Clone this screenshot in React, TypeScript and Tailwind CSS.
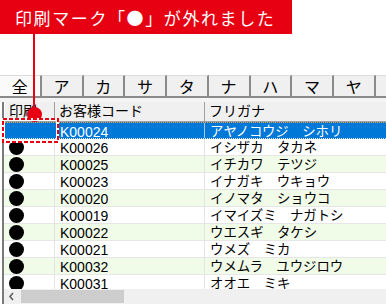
import React from "react";

const rows: [string, string][] = [
  ["K00024", "アヤノコウジ　シホリ"],
  ["K00026", "イシザカ　タカネ"],
  ["K00025", "イチカワ　テツジ"],
  ["K00023", "イナガキ　ウキョウ"],
  ["K00020", "イノマタ　ショウコ"],
  ["K00019", "イマイズミ　ナガトシ"],
  ["K00022", "ウエスギ　タケシ"],
  ["K00021", "ウメズ　ミカ"],
  ["K00032", "ウメムラ　ユウジロウ"],
  ["K00031", "オオエ　ミキ"],
];

const tabs = ["全", "ア", "カ", "サ", "タ", "ナ", "ハ", "マ", "ヤ", ""];

const font = { fontFamily: '"Liberation Sans", "Noto Sans CJK JP", sans-serif' };

export default function App() {
  return (
    <div className="relative w-[386px] h-[307px] overflow-hidden bg-white" style={font}>
      {/* banner */}
      <div className="w-[292px] h-[34px] bg-[#e60012] flex items-center pl-[15px]">
        <span
          className="text-white text-[17px] tracking-[1.6px] leading-none"
          style={{ fontFamily: '"Noto Sans CJK JP", sans-serif' }}
        >
          印刷マーク「●」が外れました
        </span>
      </div>
      <div className="h-[41px]" />
      {/* tabs */}
      <div className="flex h-[21px] w-[420px]">
        {tabs.map((t, i) => (
          <div
            key={i}
            className={`w-[41.75px] shrink-0 flex items-center justify-center text-[16px] text-black border-t border-[#dcdcdc] border-r-2 border-r-[#8a8a8a] ${
              i === 0 ? "bg-[#fafafa]" : "bg-[#f0f0f0]"
            }`}
            style={{ fontFamily: '"Noto Sans CJK JP", sans-serif' }}
          >
            {t}
          </div>
        ))}
      </div>
      <div className="h-[2px] bg-[#8a8a8a]" />
      <div className="h-[4px] bg-[#f4f4f4]" />
      {/* grid */}
      <div className="ml-[2px] border-l-2 border-[#7a7a7a] h-[202px] flex flex-col">
        {/* header */}
        <div className="flex h-[20px] bg-[#f0f0f0] border-b border-[#a0a0a0] text-[14px] text-black shrink-0">
          <div className="w-[51px] shrink-0 border-r border-[#a0a0a0] border-l border-l-white pl-[4px] flex items-center overflow-hidden whitespace-nowrap">
            印刷
          </div>
          <div className="w-[150px] shrink-0 border-r border-[#a0a0a0] pl-[4px] flex items-center">
            お客様コード
          </div>
          <div className="flex-1 pl-[4px] flex items-center">フリガナ</div>
        </div>
        {/* rows */}
        <div className="flex-1 overflow-hidden">
          {rows.map(([code, kana], i) => {
            const sel = i === 0;
            const bg = sel ? "bg-[#0078d7] text-white" : i % 2 === 0 ? "bg-[#f0fbe8] text-black" : "bg-white text-black";
            return (
              <div
                key={code}
                className={`flex h-[17px] text-[14px] leading-none border-b border-[#e6e6e6] ${bg} ${
                  sel ? "border-t border-t-[#f5a142] border-dotted" : ""
                }`}
              >
                <div className={`w-[51px] shrink-0 border-r ${sel ? "border-[#0078d7]" : "border-[#e3e3e3]"} flex items-center pl-[5px]`}>
                  {!sel && <div className="w-[15px] h-[15px] rounded-full bg-black" />}
                </div>
                <div className={`w-[150px] shrink-0 border-r ${sel ? "border-[#9ec8ee]" : "border-[#e3e3e3]"} flex items-center pl-[5px] pt-[2px]`}>
                  {code}
                </div>
                <div className="flex-1 flex items-center pl-[5px] pt-[2px] whitespace-nowrap text-[13.4px]">{kana}</div>
              </div>
            );
          })}
        </div>
        {/* scrollbar */}
        <div className="h-[15px] bg-[#f0f0f0] flex items-center shrink-0">
          <svg width="17" height="15" viewBox="0 0 17 15" className="shrink-0">
            <path d="M9 4 L6 7.5 L9 11" stroke="#606060" strokeWidth="1.6" fill="none" />
          </svg>
          <div className="w-[103px] h-[13px] bg-[#cdcdcd]" />
        </div>
      </div>
      {/* callout line + dot */}
      <div className="absolute left-[33px] top-[34px] w-[2px] h-[80px] bg-[#e60012]" />
      <div className="absolute left-[27px] top-[107px] w-[15px] h-[15px] rounded-full bg-[#e60012]" />
      {/* dashed highlight box */}
      <svg className="absolute left-[2px] top-[118px]" width="57" height="25" viewBox="0 0 57 25">
        <rect x="2" y="2" width="53" height="21" fill="none" stroke="#ffffff" strokeWidth="2" />
        <rect x="1" y="1" width="55" height="23" fill="none" stroke="#ffffff" strokeWidth="2" />
        <rect x="1" y="1" width="55" height="23" fill="none" stroke="#e60012" strokeWidth="2" strokeDasharray="4 2" />
      </svg>
    </div>
  );
}
